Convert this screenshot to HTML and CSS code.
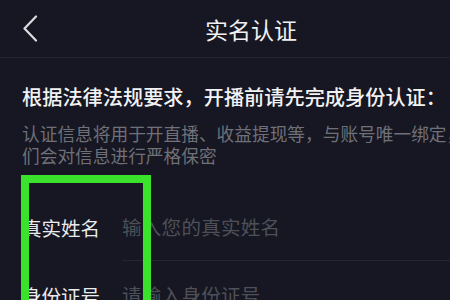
FILE: index.html
```html
<!DOCTYPE html>
<html lang="zh-CN">
<head>
<meta charset="utf-8">
<link rel="stylesheet" href="styles.css">
</head>
<body>
<div class="page">
  <header class="nav">
    <svg class="back" width="16" height="28" viewBox="0 0 16 28"><path d="M14 1.5 L2.5 13.5 L14 25.5" fill="none" stroke="#dcdcdf" stroke-width="2.2" stroke-linecap="round" stroke-linejoin="round"/></svg>
    <h1 class="title">实名认证</h1>
  </header>
  <section class="intro">
    <p class="lead">根据法律法规要求，开播前请先完成身份认证：</p>
    <p class="note">认证信息将用于开直播、收益提现等，与账号唯一绑定，<br>们会对信息进行严格保密</p>
  </section>
  <section class="form">
    <div class="row">
      <div class="label">真实姓名</div>
      <div class="field">输入您的真实姓名</div>
    </div>
    <div class="row">
      <div class="label">身份证号</div>
      <div class="field">请输入身份证号</div>
    </div>
    <div class="highlight"></div>
  </section>
</div>
</body>
</html>
```
FILE: styles.css
```css
html, body {
  margin: 0;
  padding: 0;
  background: #161722;
  overflow: hidden;
}
body {
  width: 450px;
  height: 300px;
  font-family: "Noto Sans CJK SC", "Noto Sans", sans-serif;
  color: #ececee;
}
.page {
  width: 450px;
  height: 300px;
  overflow: hidden;
}
.nav {
  height: 57px;
  border-bottom: 1px solid #22242e;
  display: flex;
  align-items: center;
  padding-left: 22px;
}
.back {
  display: block;
  width: 16px;
  height: 28px;
}
.title {
  margin: 0 0 0 167px;
  font-size: 23px;
  font-weight: 400;
  line-height: 30px;
  color: #f0f0f2;
}
.intro {
  padding: 0 0 0 22px;
}
.lead {
  margin: 24px 0 0;
  font-size: 20.2px;
  line-height: 30px;
  font-weight: 500;
  color: #f2f2f4;
  white-space: nowrap;
}
.note {
  margin: 10px 0 0;
  font-size: 17.7px;
  line-height: 22px;
  color: #6f7078;
  white-space: nowrap;
}
.form {
  position: relative;
  margin-top: 27px;
  padding-left: 22px;
}
.row {
  display: flex;
  height: 68px;
}
.label {
  width: 100px;
  display: flex;
  align-items: center;
  font-size: 19.5px;
  color: #ebebed;
}
.field {
  flex: 1;
  display: flex;
  align-items: center;
  border-bottom: 1px solid #23252f;
  font-size: 19.5px;
  letter-spacing: 0.3px;
  color: #4e5059;
}
.highlight {
  position: absolute;
  left: 21px;
  top: -18px;
  width: 130px;
  height: 160px;
  box-sizing: border-box;
  border: 8.5px solid #3ae22c;
}
```
